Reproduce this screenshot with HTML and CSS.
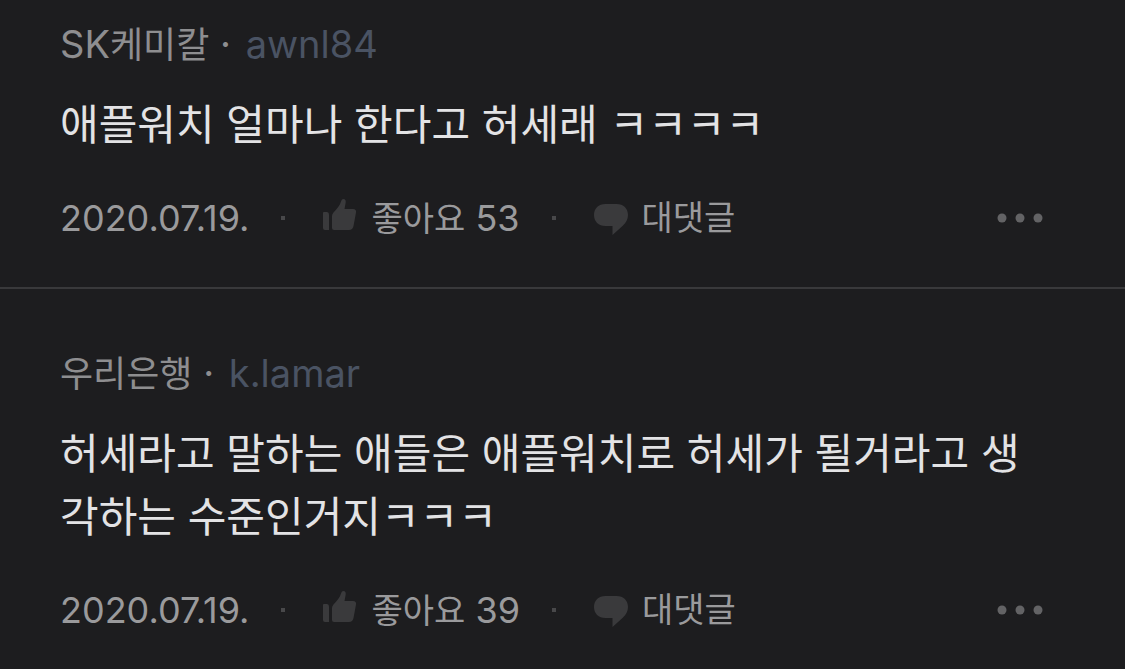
FILE: index.html
```html
<!DOCTYPE html>
<html lang="ko">

<head>
    <meta charset="UTF-8" />
    <meta name="viewport" content="width=device-width, initial-scale=1.0" />
    <title>댓글</title>
    <link rel="stylesheet" href="styles.css">
</head>

<body>
    <!-- 공용 아이콘 -->
    <svg class="sprite" aria-hidden="true">
        <symbol id="icon-like" viewBox="0 0 34 38">
            <path d="M1 13h3q2 0 2 2.500V31H2q-2 0-2-2V14q0-1 1-1z" />
            <path d="M9 17q0-2 1.500-3.500C14.500 9.500 17 6 18 2.500 18.500.8 19.300 0 20.500 0c1.700 0 2.500 1.500 2.200 3.500L21.500 10H30q3.500 0 3 3.500L30.500 27q-.8 4-4.500 4H11q-2 0-2-2z" />
        </symbol>
        <symbol id="icon-reply" viewBox="0 -5 34 38">
            <path d="M11.500 0h11C29.500 0 34 4.500 34 11c0 4.500-2 7.500-5 10.500L18.500 31v-9h-7C4.500 22 0 17.500 0 11S4.500 0 11.500 0z" />
        </symbol>
        <symbol id="icon-more" viewBox="0 0 46 10">
            <circle cx="5" cy="5" r="4.500" />
            <circle cx="23" cy="5" r="4.500" />
            <circle cx="41" cy="5" r="4.500" />
        </symbol>
    </svg>

    <main class="comments">
        <article class="comment">
            <div class="writer">SK<span class="ko">케미칼</span> · <a class="nickname" href="#">awnl84</a></div>
            <p class="content">애플워치 얼마나 한다고 허세래 ㅋㅋㅋㅋ</p>
            <div class="info">
                <time datetime="2020-07-19">2020.07.19.</time>
                <span class="dot"></span>
                <button class="btn" type="button"><svg class="icon"><use href="#icon-like" /></svg><span><span class="ko">좋아요</span> 53</span></button>
                <span class="dot"></span>
                <button class="btn" type="button"><svg class="icon"><use href="#icon-reply" /></svg><span class="ko">대댓글</span></button>
                <button class="btn more" type="button" aria-label="더보기"><svg class="icon-more"><use href="#icon-more" /></svg></button>
            </div>
        </article>

        <article class="comment">
            <div class="writer"><span class="ko">우리은행</span> · <a class="nickname" href="#">k.lamar</a></div>
            <p class="content">허세라고 말하는 애들은 애플워치로 허세가 될거라고 생각하는 수준인거지ㅋㅋㅋ</p>
            <div class="info">
                <time datetime="2020-07-19">2020.07.19.</time>
                <span class="dot"></span>
                <button class="btn" type="button"><svg class="icon"><use href="#icon-like" /></svg><span><span class="ko">좋아요</span> 39</span></button>
                <span class="dot"></span>
                <button class="btn" type="button"><svg class="icon"><use href="#icon-reply" /></svg><span class="ko">대댓글</span></button>
                <button class="btn more" type="button" aria-label="더보기"><svg class="icon-more"><use href="#icon-more" /></svg></button>
            </div>
        </article>
    </main>
</body>

</html>
```
FILE: styles.css
```css
* {
    box-sizing: border-box;
}

body {
    margin: 0;
    background-color: #1d1d1f;
    color: #e3e3e5;
    font-family: Inter, 'Noto Sans CJK KR', sans-serif;
    font-weight: 400;
}

.sprite {
    display: none;
}

.comment {
    padding: 60px 82px 45px 60px;
}

.comment:first-child {
    padding-top: 20px;
}

.comment:last-child {
    padding-bottom: 35px;
}

.comment + .comment {
    border-top: 2px solid #39393b;
}

.writer {
    height: 48px;
    line-height: 48px;
    font-size: 38px;
    color: #8e8e90;
}

.writer .ko {
    font-size: 36px;
}

.nickname {
    margin-left: 4px;
    color: #4a5363;
    text-decoration: none;
}

.content {
    margin: 25px 0 38px;
    font-size: 42px;
    line-height: 63px;
    word-break: break-all;
}

.info {
    display: flex;
    align-items: center;
    height: 48px;
    font-size: 36px;
    line-height: 48px;
    color: #9a9a9c;
}

.info .ko {
    font-size: 34px;
}

.dot {
    width: 4px;
    height: 4px;
    margin: 0 38px 0 32px;
    background: #48484a;
}

.btn {
    display: flex;
    align-items: center;
    gap: 14px;
    padding: 0;
    border: none;
    background: none;
    color: inherit;
    font: inherit;
    cursor: pointer;
}

.icon {
    width: 34px;
    height: 38px;
    fill: #3a3a3c;
}

.more {
    margin-left: auto;
}

.icon-more {
    width: 46px;
    height: 10px;
    fill: #636365;
}
```
